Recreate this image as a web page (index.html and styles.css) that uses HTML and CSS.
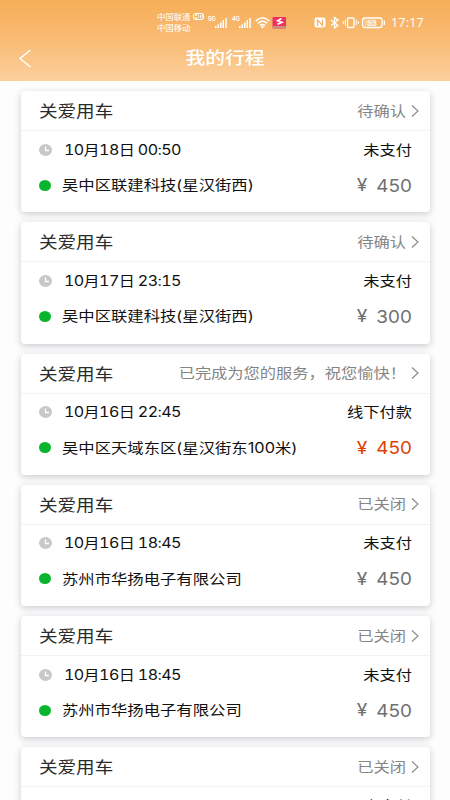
FILE: index.html
```html
<!DOCTYPE html>
<html lang="zh-CN">
<head>
<meta charset="utf-8">
<title>我的行程</title>
<link rel="stylesheet" href="styles.css">
</head>
<body>
<header class="top">
  <div class="status">
    <div class="carriers">
      <div class="carrier"><span>中国联通</span><b class="hd">HD</b></div>
      <div class="carrier"><span>中国移动</span></div>
    </div>
    <svg class="signals" width="82" height="20" viewBox="0 0 82 20" fill="#fff">
      <text class="net" x="0" y="9">5G</text>
      <path d="M7 14h1.500v2H7zM9.500 12.500h1.500v3.500H9.500zM12 10.500h1.500V16H12zM14.500 8h1.500v8h-1.500zM17.300 6h1.500v10h-1.500z"/>
      <text class="net" x="24" y="9">4G</text>
      <path d="M31 14h1.500v2H31zM33.500 12.500h1.500v3.500h-1.500zM36 10.500h1.500V16H36zM38.500 8h1.500v8h-1.500zM41.300 6h1.500v10h-1.500z"/>
      <g fill="none" stroke="#fff" stroke-width="1.600"><path d="M47.700 9Q54.500 2.500 61.300 9M49.900 11.400Q54.500 6.900 59.100 11.400M52 13.600Q54.500 11.400 57 13.600"/></g>
      <circle cx="54.500" cy="15" r="1.200"/>
      <rect x="64.500" y="5" width="13.500" height="11.500" rx="1" fill="#f0315f"/>
      <path d="M64.500 14h13.500v2.500H64.500z" fill="#c99082"/>
      <path d="M73.500 6.500l-4 2.300 4.500 1.500-4.500 2" fill="none" stroke="#fff" stroke-width="1.500"/>
    </svg>
    <svg class="devices" width="76" height="16" viewBox="0 0 76 16" fill="none" stroke="#fff" stroke-width="1.300">
      <rect x=".5" y="2.500" width="11" height="10" rx="2" fill="#fff" stroke="none"/>
      <path d="M3.500 11V5l5 5.500V4.500" stroke="#f8b468"/>
      <path d="M17 5l7 5.500-3.500 2.500V2.500L24 5l-7 5.500"/>
      <rect x="33.500" y="3" width="6.500" height="9.500" rx="1"/>
      <path d="M31.300 4.500v6M29.300 6v3M42.200 4.500v6M44.200 6v3" stroke-width="1"/>
      <rect x="48.600" y="3" width="19.500" height="9.500" rx="2.500"/>
      <path d="M70.300 5.500v4.500"/>
      <rect x="50.500" y="4.700" width="12" height="6" fill="#fff" fill-opacity=".35" stroke="none"/>
      <text class="battery" x="53" y="11">53</text>
    </svg>
    <span class="clock">17:17</span>
  </div>
  <div class="nav">
    <svg class="back" width="14" height="20" viewBox="0 0 14 20"><path d="M12.500 2L2 10.500 12.500 19" fill="none" stroke="#fff" stroke-width="1.500"/></svg>
    <h1>我的行程</h1>
  </div>
</header>
<main class="list" id="list"></main>
<script src="app.js"></script>
</body>
</html>
```
FILE: app.js
```js
const trips = [
  ["待确认", "10月18日 00:50", "未支付", "吴中区联建科技(星汉街西)", "450"],
  ["待确认", "10月17日 23:15", "未支付", "吴中区联建科技(星汉街西)", "300"],
  ["已完成为您的服务，祝您愉快！", "10月16日 22:45", "线下付款", "吴中区天域东区(星汉街东100米)", "450", "paid"],
  ["已关闭", "10月16日 18:45", "未支付", "苏州市华扬电子有限公司", "450"],
  ["已关闭", "10月16日 18:45", "未支付", "苏州市华扬电子有限公司", "450"],
  ["已关闭", "10月16日 18:45", "未支付", "苏州市华扬电子有限公司", "450"]
];

document.getElementById("list").innerHTML = trips.map(([state, date, pay, place, price, cls = ""]) => `
  <article class="card">
    <div class="head">
      <span class="wide title">关爱用车</span>
      <span class="wide right state">${state}</span>
      <svg class="chevron" width="8" height="12" viewBox="0 0 8 12"><path d="M1 .5l6 5.500-6 5.500" fill="none" stroke="#888" stroke-width="1.100"/></svg>
    </div>
    <div class="row when">
      <svg class="time" width="13" height="12" viewBox="0 0 13 12"><ellipse cx="6.500" cy="6" rx="6.500" ry="5.900" fill="#c8c8c8"/><path d="M6.500 2.500V6.500H10" fill="none" stroke="#fff" stroke-width="1.300"/></svg>
      <span class="wide date">${date}</span>
      <span class="wide right pay">${pay}</span>
    </div>
    <div class="row where">
      <i class="dot"></i>
      <span class="wide place">${place}</span>
      <span class="price ${cls}"><span class="yen">¥</span><span class="amount">${price}</span></span>
    </div>
  </article>`).join("");
```
FILE: styles.css
```css
* { box-sizing: border-box; }
body {
  margin: 0;
  height: 800px;
  overflow: hidden;
  background: #fdfdfe;
  font-family: Inter, "Noto Sans CJK SC", sans-serif;
  color: #111;
}
.top {
  height: 80.500px;
  background: linear-gradient(#f6ae58, #f9bb74 50%, #fbd09d);
  color: #fff;
}
.status {
  display: flex;
  height: 36px;
  padding: 12px 0 0 157px;
}
.carriers { width: 51px; font-size: 8.400px; }
.carrier { display: flex; height: 11px; line-height: 11px; white-space: nowrap; }
.hd {
  width: 11px;
  height: 7px;
  margin: 1px 0 0 2.500px;
  border-radius: 3px;
  background: #fff;
  color: #f0a048;
  font-size: 6px;
  line-height: 7px;
  text-align: center;
}
.net { font-size: 5.500px; font-weight: 700; }
.devices { margin: 3px 0 0 24px; }
.battery { font-size: 8px; fill: #fff; stroke: none; }
.clock {
  margin: 3px 0 0 1px;
  font-family: "Open Sans", sans-serif;
  font-size: 12.500px;
  font-weight: 500;
  line-height: 16px;
  letter-spacing: .2px;
}
.nav {
  display: grid;
  grid-template-columns: 60px 1fr 60px;
  align-items: center;
  height: 44px;
}
.back { margin-left: 18px; }
h1 {
  margin: 0;
  font-size: 17px;
  font-weight: 500;
  line-height: 24px;
  text-align: center;
  transform: scaleX(1.160);
}
.list {
  display: grid;
  gap: 10px;
  padding: 10.500px 20px 0 21px;
}
.card {
  height: 121.300px;
  border-radius: 4px;
  background: #fff;
  box-shadow: 0 2px 7px rgba(40, 45, 55, .24);
}
.head {
  display: flex;
  align-items: center;
  height: 40px;
  padding: 0 11px 0 18px;
  border-bottom: 1px solid #f3f3f4;
}
.wide {
  padding-bottom: 2px;
  white-space: nowrap;
  transform: scaleX(1.160);
  transform-origin: left center;
}
.right { margin-left: auto; transform-origin: right center; }
.title { padding-bottom: 1px; font-size: 16px; color: #2b2b2b; }
.state { font-size: 14px; color: #858585; }
.chevron { margin-left: 5px; }
.row { display: flex; align-items: center; padding: 0 18px; }
.when { height: 37px; }
.date {
  margin-left: 12px;
  font-size: 14px;
  font-variant-numeric: tabular-nums;
  letter-spacing: -.55px;
  transform: scaleX(1.150);
}
.pay { font-size: 14px; }
.where { height: 34px; }
.dot { width: 12px; height: 11px; border-radius: 50%; background: #08b52c; }
.place { margin-left: 11px; font-size: 14px; transform: scaleX(1.167); }
.price {
  display: flex;
  align-items: center;
  gap: 11.500px;
  margin-left: auto;
  color: #707070;
  font-size: 17.500px;
  line-height: 24px;
}
.yen { font-size: 17px; transform: scaleX(1.130); transform-origin: right center; }
.amount {
  padding-top: 1px;
  transform: scaleX(1.080);
  transform-origin: right center;
}
.paid { color: #e04205; }
```
